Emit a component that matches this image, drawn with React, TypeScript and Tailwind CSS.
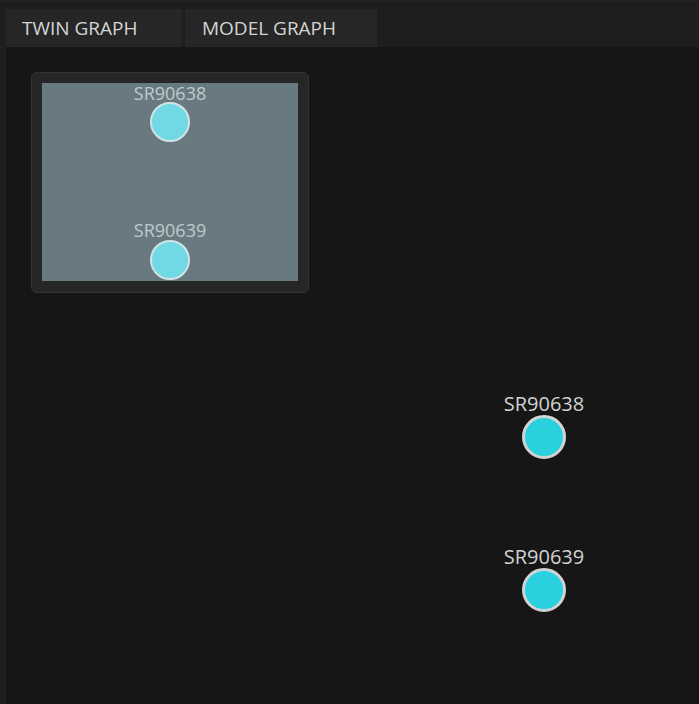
import React from "react";

export default function App() {
  return (
    <div className="w-[699px] h-[704px] flex flex-col bg-[#161616] overflow-hidden" style={{ fontFamily: '"Open Sans", "Noto Sans", sans-serif' }}>
      <div className="h-[47px] shrink-0 bg-[#1e1e1e] border-t-2 border-[#222222] flex items-end pl-[6px] gap-[3px]">
        <div className="w-[176px] h-[38px] bg-[#262626] flex items-center pl-[16px] text-[19px] text-[#d4d4d4] leading-none">TWIN GRAPH</div>
        <div className="w-[192px] h-[38px] bg-[#262626] flex items-center pl-[17px] text-[19px] text-[#d4d4d4] leading-none">MODEL GRAPH</div>
      </div>
      <div className="flex-1 flex">
        <div className="w-[6px] bg-[#1f1f1f]" />
        <div className="flex-1 relative">
          <div className="absolute left-[25px] top-[25px] w-[278px] h-[221px] rounded-md bg-[#262626] border border-[#343434] p-[10px]">
            <div className="relative w-[256px] h-[198px] bg-[#687a80]">
              <div className="absolute left-[108px] top-[1px] w-[40px] flex flex-col items-center">
                <div className="text-[18px] leading-none h-[18px] whitespace-nowrap text-[#bfcbce] font-medium">SR90638</div>
              </div>
              <div className="absolute left-[108px] top-[19px] w-[40px] h-[40px] rounded-full bg-[#70d9e5] border-2 border-[#d4e2e4]" />
              <div className="absolute left-[108px] top-[138px] w-[40px] flex flex-col items-center">
                <div className="text-[18px] leading-none h-[18px] whitespace-nowrap text-[#bfcbce] font-medium">SR90639</div>
              </div>
              <div className="absolute left-[108px] top-[157px] w-[40px] h-[40px] rounded-full bg-[#70d9e5] border-2 border-[#d4e2e4]" />
            </div>
          </div>

          <div className="absolute left-[516px] top-[347px] w-[44px] flex flex-col items-center">
            <div className="text-[20px] leading-none h-[20px] whitespace-nowrap text-[#d2d2d2] font-medium">SR90638</div>
          </div>
          <div className="absolute left-[516px] top-[368px] w-[44px] h-[44px] rounded-full bg-[#29d0dd] border-[3px] border-[#d3d3d3]" />

          <div className="absolute left-[516px] top-[500px] w-[44px] flex flex-col items-center">
            <div className="text-[20px] leading-none h-[20px] whitespace-nowrap text-[#d2d2d2] font-medium">SR90639</div>
          </div>
          <div className="absolute left-[516px] top-[521px] w-[44px] h-[44px] rounded-full bg-[#29d0dd] border-[3px] border-[#d3d3d3]" />
        </div>
      </div>
    </div>
  );
}
